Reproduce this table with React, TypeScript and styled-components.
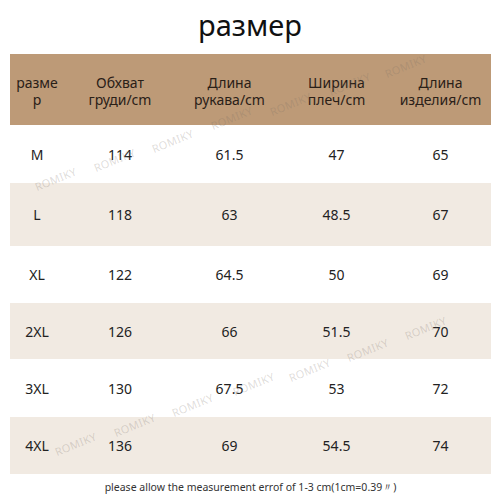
import styled, { createGlobalStyle } from 'styled-components'

const GlobalStyle = createGlobalStyle`
  html, body {
    margin: 0;
    padding: 0;
    background: #fff;
  }
  body {
    font-family: "Noto Sans", "Open Sans", sans-serif;
    color: #1e1a16;
  }
`

const Page = styled.div`
  position: relative;
  width: 500px;
  height: 500px;
  overflow: hidden;
  background: #fff;
  display: flex;
  flex-direction: column;
`

const Title = styled.h1`
  margin: 0;
  height: 54px;
  display: flex;
  align-items: center;
  justify-content: center;
  font-size: 29px;
  font-weight: 400;
  color: #111;
  padding-bottom: 6px;
  box-sizing: border-box;
`

const Table = styled.div`
  margin: 0 9px 0 10px;
  display: flex;
  flex-direction: column;
`

const Row = styled.div<{ $bg: string; $h: number }>`
  display: grid;
  grid-template-columns: 54px 112px 107px 107px 101px;
  align-items: center;
  height: ${({ $h }) => $h}px;
  background: ${({ $bg }) => $bg};
`

const HeadCell = styled.div`
  text-align: center;
  font-size: 14px;
  line-height: 17px;
  color: #2a2018;
  padding-top: 2px;
`

const Cell = styled.div`
  text-align: center;
  font-size: 14px;
  color: #222;
`

const Note = styled.div`
  flex: 1;
  display: flex;
  align-items: center;
  justify-content: center;
  font-size: 10.5px;
  color: #333;
  padding-left: 1px;
`

const Mark = styled.span`
  position: absolute;
  font-family: "Noto Sans", sans-serif;
  font-size: 11px;
  letter-spacing: 0.3px;
  color: rgba(120, 110, 100, 0.24);
  transform: rotate(-22deg);
  transform-origin: left bottom;
  pointer-events: none;
  white-space: nowrap;
`

const rows = [
  { size: 'M', v: ['114', '61.5', '47', '65'], h: 58 },
  { size: 'L', v: ['118', '63', '48.5', '67'], h: 63 },
  { size: 'XL', v: ['122', '64.5', '50', '69'], h: 57 },
  { size: '2XL', v: ['126', '66', '51.5', '70'], h: 56 },
  { size: '3XL', v: ['130', '67.5', '53', '72'], h: 58 },
  { size: '4XL', v: ['136', '69', '54.5', '74'], h: 57 },
]

// watermark anchors
const marks = [
  [388, 66], [332, 84], [273, 104], [214, 118],
  [155, 141], [97, 160], [38, 179],
  [408, 328], [350, 350], [292, 370],
  [236, 384], [175, 405], [117, 425], [58, 444],
]

export default function App() {
  return (
    <>
      <GlobalStyle />
      <Page>
        <Title>размер</Title>
        <Table>
          <Row $bg="#bd9a77" $h={71}>
            <HeadCell>разме<br />р</HeadCell>
            <HeadCell>Обхват<br />груди/cm</HeadCell>
            <HeadCell>Длина<br />рукава/cm</HeadCell>
            <HeadCell>Ширина<br />плеч/cm</HeadCell>
            <HeadCell>Длина<br />изделия/cm</HeadCell>
          </Row>
          {rows.map((r, i) => (
            <Row key={r.size} $bg={i % 2 ? '#f1eae2' : '#ffffff'} $h={r.h}>
              <Cell>{r.size}</Cell>
              {r.v.map((x, j) => (
                <Cell key={j}>{x}</Cell>
              ))}
            </Row>
          ))}
        </Table>
        <Note>please allow the measurement errof of 1-3 cm(1cm=0.39〃)</Note>
        {marks.map(([x, y], i) => (
          <Mark key={i} style={{ left: x, top: y }}>ROMIKY</Mark>
        ))}
      </Page>
    </>
  )
}
